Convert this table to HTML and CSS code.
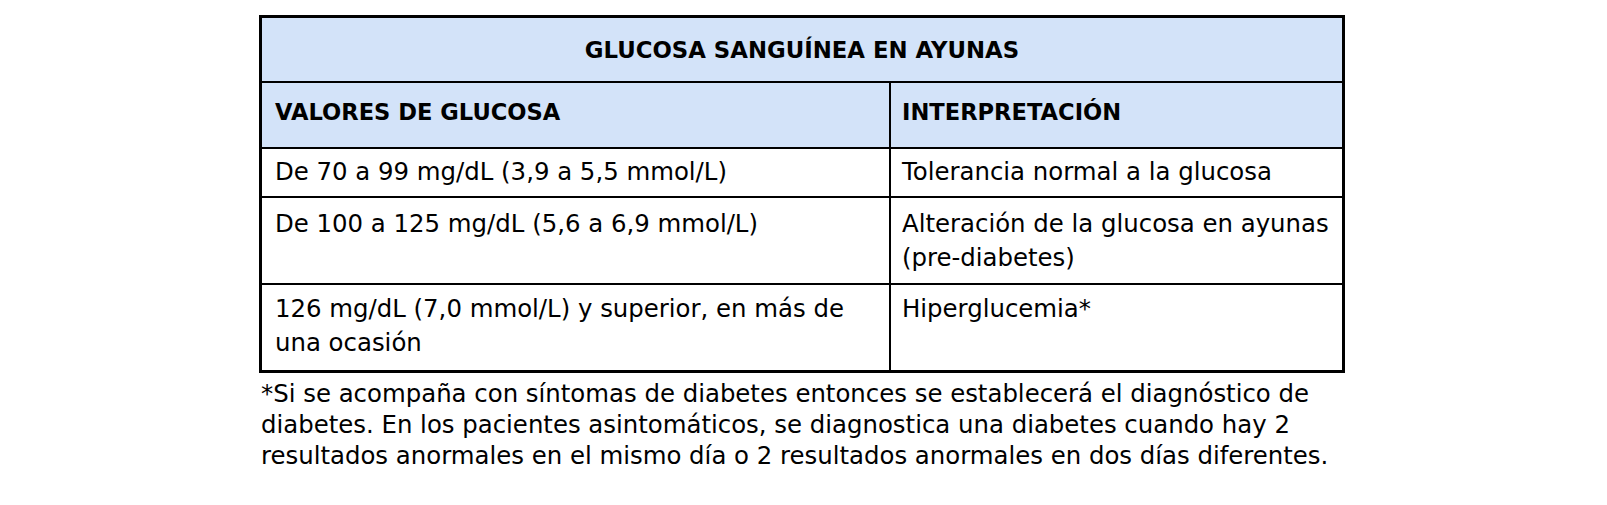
FILE: index.html
```html
<!DOCTYPE html>
<html lang="es">
<head>
<meta charset="utf-8">
<title>Glucosa sanguínea en ayunas</title>
<link rel="stylesheet" href="styles.css">
</head>
<body>
<div class="page">
  <div class="gtable">
    <div class="cell title">GLUCOSA SANGUÍNEA EN AYUNAS</div>
    <div class="cell head left">VALORES DE GLUCOSA</div>
    <div class="cell head right">INTERPRETACIÓN</div>
    <div class="cell left">De 70 a 99 mg/dL (3,9 a 5,5 mmol/L)</div>
    <div class="cell right">Tolerancia normal a la glucosa</div>
    <div class="cell left tall">De 100 a 125 mg/dL (5,6 a 6,9 mmol/L)</div>
    <div class="cell right tall">Alteración de la glucosa en ayunas<br>(pre-diabetes)</div>
    <div class="cell left last">126 mg/dL (7,0 mmol/L) y superior, en más de<br>una ocasión</div>
    <div class="cell right last">Hiperglucemia*</div>
  </div>
  <p class="note">*Si se acompaña con síntomas de diabetes entonces se establecerá el diagnóstico de<br>diabetes. En los pacientes asintomáticos, se diagnostica una diabetes cuando hay 2<br>resultados anormales en el mismo día o 2 resultados anormales en dos días diferentes.</p>
</div>
</body>
</html>
```

FILE: styles.css
```css
html, body {
  margin: 0;
  padding: 0;
  background: #ffffff;
}

body {
  font-family: "DejaVu Sans", "Liberation Sans", sans-serif;
  color: #000000;
}

.page {
  padding: 15px 0 0 259px;
}

.gtable {
  display: grid;
  grid-template-columns: 629px 451px;
  grid-template-rows: 65px 66px 49px 87px 85px;
  width: max-content;
  border: 3px solid #000000;
}

.cell {
  box-sizing: border-box;
  border-bottom: 2px solid #000000;
  font-size: 24.4px;
  line-height: 34px;
  padding: 6px 10px 0 13px;
  white-space: nowrap;
}

.cell.left {
  border-right: 2px solid #000000;
}

.cell.right {
  padding-left: 11px;
}

.cell.tall {
  padding-top: 9px;
}

.cell.last {
  padding-top: 7px;
  border-bottom: none;
}

.title {
  grid-column: 1 / span 2;
  background: #d3e3f9;
  font-weight: bold;
  font-size: 22.8px;
  padding: 0;
  display: flex;
  align-items: center;
  justify-content: center;
}

.head {
  background: #d3e3f9;
  font-weight: bold;
  font-size: 22.6px;
  padding-top: 0;
  padding-bottom: 6px;
  display: flex;
  align-items: center;
}

.note {
  margin: 6px 0 0 2px;
  font-size: 24.4px;
  line-height: 30.75px;
  white-space: nowrap;
}
```
